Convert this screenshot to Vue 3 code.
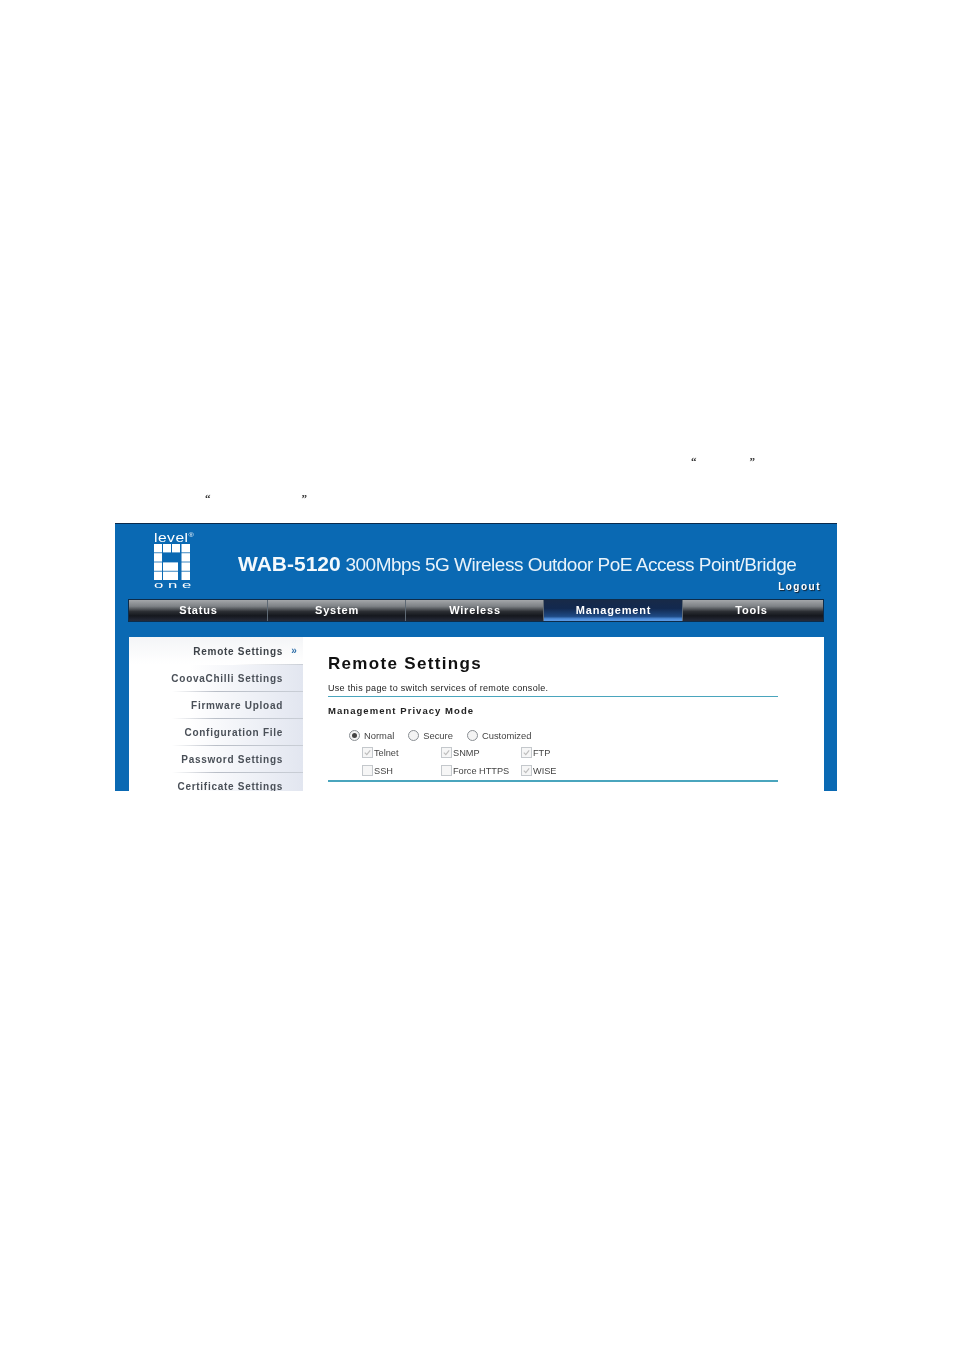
<script setup>
const tabs = ['Status', 'System', 'Wireless', 'Management', 'Tools']
const side = ['Remote Settings', 'CoovaChilli Settings', 'Firmware Upload', 'Configuration File', 'Password Settings', 'Certificate Settings']
const logoCells = [
  { x: 0, y: 0, w: 8 }, { x: 9, y: 0, w: 8 }, { x: 18, y: 0, w: 8 }, { x: 27.5, y: 0, w: 8.5 },
  { x: 0, y: 9.2, w: 8 }, { x: 27.5, y: 9.2, w: 8.5 },
  { x: 0, y: 18.4, w: 8 }, { x: 9, y: 18.4, w: 15 }, { x: 27.5, y: 18.4, w: 8.5 },
  { x: 0, y: 27.6, w: 8 }, { x: 9, y: 27.6, w: 15 }, { x: 27.5, y: 27.6, w: 8.5 }
]
const modes = [
  { label: 'Normal', on: true },
  { label: 'Secure', on: false },
  { label: 'Customized', on: false }
]
const checks = [
  { label: 'Telnet', on: true },
  { label: 'SNMP', on: true },
  { label: 'FTP', on: true },
  { label: 'SSH', on: false },
  { label: 'Force HTTPS', on: false },
  { label: 'WISE', on: true }
]
</script>

<template>
  <div class="page">
    <div class="quotes first">
      <span>“</span><span class="gap-a">”</span>
    </div>
    <div class="quotes second">
      <span>“</span><span class="gap-b">”</span>
    </div>

    <section class="shot">
      <header class="head">
        <div class="logo">
          <div class="logo-top">level<sup>®</sup></div>
          <svg class="logo-mark" viewBox="0 0 36 37" width="36" height="37">
            <rect v-for="c in logoCells" :key="c.x + '-' + c.y" :x="c.x" :y="c.y" :width="c.w" height="8.4" fill="#fff" />
          </svg>
          <div class="logo-bottom">one</div>
        </div>
        <h1 class="product"><b>WAB-5120</b> 300Mbps 5G Wireless Outdoor PoE Access Point/Bridge</h1>
        <a class="logout">Logout</a>
      </header>

      <nav class="tabs">
        <div v-for="t in tabs" :key="t" class="tab" :class="{ active: t === 'Management' }">{{ t }}</div>
      </nav>

      <div class="panel">
        <aside class="side">
          <div v-for="(s, i) in side" :key="s" class="side-item" :class="{ current: i === 0 }">
            <span>{{ s }}</span>
            <i class="arrow">{{ i === 0 ? '»' : '' }}</i>
          </div>
        </aside>

        <main class="main">
          <h2 class="title">Remote Settings</h2>
          <p class="desc">Use this page to switch services of remote console.</p>
          <h3 class="sub">Management Privacy Mode</h3>
          <div class="radios">
            <label v-for="m in modes" :key="m.label" class="radio-row">
              <span class="radio" :class="{ on: m.on }"></span>{{ m.label }}
            </label>
          </div>
          <div class="checks">
            <label v-for="c in checks" :key="c.label" class="check-row">
              <span class="box">
                <svg v-if="c.on" viewBox="0 0 10 10" width="9" height="9">
                  <path d="M2 5.2 L4.2 7.4 L8 2.6" fill="none" stroke="#bdbdbd" stroke-width="1.3" />
                </svg>
              </span>{{ c.label }}
            </label>
          </div>
          <div class="rule"></div>
        </main>
      </div>
    </section>
  </div>
</template>

<style scoped>
.page {
  width: 954px;
  height: 1350px;
  background: #fff;
  overflow: hidden;
  font-family: "Liberation Sans", Arial, sans-serif;
}
.quotes {
  display: flex;
  font-family: "Liberation Serif", serif;
  font-size: 11px;
  font-weight: bold;
  line-height: 12px;
  color: #333;
  filter: grayscale(1);
}
.first {
  padding: 455px 0 0 691px;
}
.gap-a {
  margin-left: 53px;
}
.second {
  padding: 25px 0 0 205px;
}
.gap-b {
  margin-left: 91px;
}
.shot {
  margin: 19px 0 0 115px;
  width: 722px;
  height: 268px;
  box-sizing: border-box;
  background: #0a69b3;
  border-top: 1px solid #0a2a4c;
  overflow: hidden;
  filter: blur(0.35px);
}
.head {
  position: relative;
  height: 75px;
  display: flex;
  align-items: flex-start;
}
.logo {
  width: 50px;
  margin-left: 39px;
  padding-top: 7px;
  color: #fff;
}
.logo-top {
  font-size: 13px;
  line-height: 13px;
  letter-spacing: 0.4px;
  height: 13px;
  white-space: nowrap;
  transform: scaleX(1.2);
  transform-origin: left center;
}
.logo-top sup {
  font-size: 6px;
  line-height: 0;
  vertical-align: 5px;
}
.logo-mark {
  display: block;
}
.logo-bottom {
  font-size: 12px;
  line-height: 9px;
  letter-spacing: 3.3px;
  transform: scale(1.4, 0.72);
  transform-origin: left center;
  white-space: nowrap;
}
.product {
  margin: 28px 0 0 34px;
  font-size: 19px;
  line-height: 24px;
  font-weight: normal;
  letter-spacing: -0.5px;
  color: #e9f3fa;
  white-space: nowrap;
}
.product b {
  font-size: 21px;
  letter-spacing: 0;
  color: #f4f9fc;
}
.logout {
  position: absolute;
  right: 16px;
  top: 56px;
  font-size: 10px;
  line-height: 13px;
  font-weight: bold;
  letter-spacing: 1.5px;
  color: #fff;
  text-shadow: 1px 1px 1px #123;
}
.tabs {
  margin-left: 13px;
  width: 696px;
  height: 23px;
  display: grid;
  grid-template-columns: 139px 138px 138px 139px 1fr;
  box-sizing: border-box;
  border: 1px solid #0d2c4a;
  background: #222;
}
.tab {
  text-align: center;
  font-size: 11px;
  line-height: 20px;
  font-weight: bold;
  letter-spacing: 0.82px;
  padding-left: 1px;
  color: #fff;
  background: linear-gradient(#a4a7aa 0, #7d8185 30%, #2b2e33 55%, #15181e 75%, #262b3a 100%);
  border-right: 1px solid #5e6974;
}
.tab:last-child {
  border-right: 0;
  padding: 0 3px 0 0;
}
.tab.active {
  background: linear-gradient(#182a48 0, #12294f 40%, #1e4a85 78%, #4f8edb 90%, #5d9ae4 100%);
}
.panel {
  margin: 15px 0 0 14px;
  width: 695px;
  height: 160px;
  background: #fff;
  display: flex;
}
.side {
  width: 174px;
  flex: none;
}
.side-item {
  height: 27px;
  box-sizing: border-box;
  display: flex;
  justify-content: flex-end;
  align-items: center;
  padding-top: 1px;
  font-size: 10px;
  font-weight: bold;
  letter-spacing: 0.72px;
  color: #4a5058;
  background: linear-gradient(90deg, #fff 35%, #e2e6f0 100%);
  border-bottom: 1px solid #c9ced6;
  border-image: linear-gradient(90deg, #fff 25%, #b9bec7 50%, #c9ced6 100%) 1;
}
.side-item:first-child {
  height: 28px;
}
.side-item span {
  white-space: nowrap;
}
.side-item.current {
  background: linear-gradient(#f4f5f7, #fff);
  border-image: linear-gradient(90deg, #fff 60%, #c9ced6 100%) 1;
  color: #3d4248;
}
.arrow {
  width: 20px;
  flex: none;
  font-style: normal;
  font-size: 10px;
  line-height: 10px;
  text-align: center;
  padding-left: 3px;
  box-sizing: border-box;
  color: #2f6fa8;
}
.main {
  width: 450px;
  margin-left: 25px;
  color: #333;
}
.title {
  margin: 17px 0 0;
  font-size: 17px;
  line-height: 20px;
  font-weight: bold;
  letter-spacing: 1.32px;
  color: #111;
}
.desc {
  margin: 8px 0 0;
  padding-bottom: 2px;
  font-size: 9px;
  line-height: 12px;
  letter-spacing: 0.31px;
  border-bottom: 1px solid #4aa5bd;
  color: #222;
}
.sub {
  margin: 8px 0 0;
  font-size: 9.5px;
  line-height: 12px;
  font-weight: bold;
  letter-spacing: 1.05px;
  color: #222;
}
.radios {
  display: flex;
  margin: 12px 0 0 21px;
  height: 14px;
}
.radio-row {
  display: flex;
  align-items: center;
  font-size: 9.4px;
  line-height: 14px;
  margin-right: 14px;
  color: #444;
}
.radio {
  width: 9px;
  height: 9px;
  margin-right: 4px;
  border: 1px solid #8a8f94;
  border-radius: 50%;
  background: #f4f4f4;
  position: relative;
  top: -1px;
}
.radio.on::after {
  content: "";
  position: absolute;
  left: 2px;
  top: 2px;
  width: 5px;
  height: 5px;
  border-radius: 50%;
  background: #444;
}
.checks {
  display: grid;
  grid-template-columns: 79px 80px auto;
  grid-auto-rows: 18px;
  margin: 1px 0 0 34px;
}
.check-row {
  display: flex;
  align-items: center;
  font-size: 9.2px;
  color: #444;
  white-space: nowrap;
}
.box {
  width: 9px;
  height: 9px;
  margin-right: 1px;
  border: 1px solid #c4c8cc;
  background: #f6f6f6;
  position: relative;
  top: -1px;
}
.box svg {
  display: block;
}
.rule {
  height: 2px;
  background: #4aa5bd;
}
</style>
